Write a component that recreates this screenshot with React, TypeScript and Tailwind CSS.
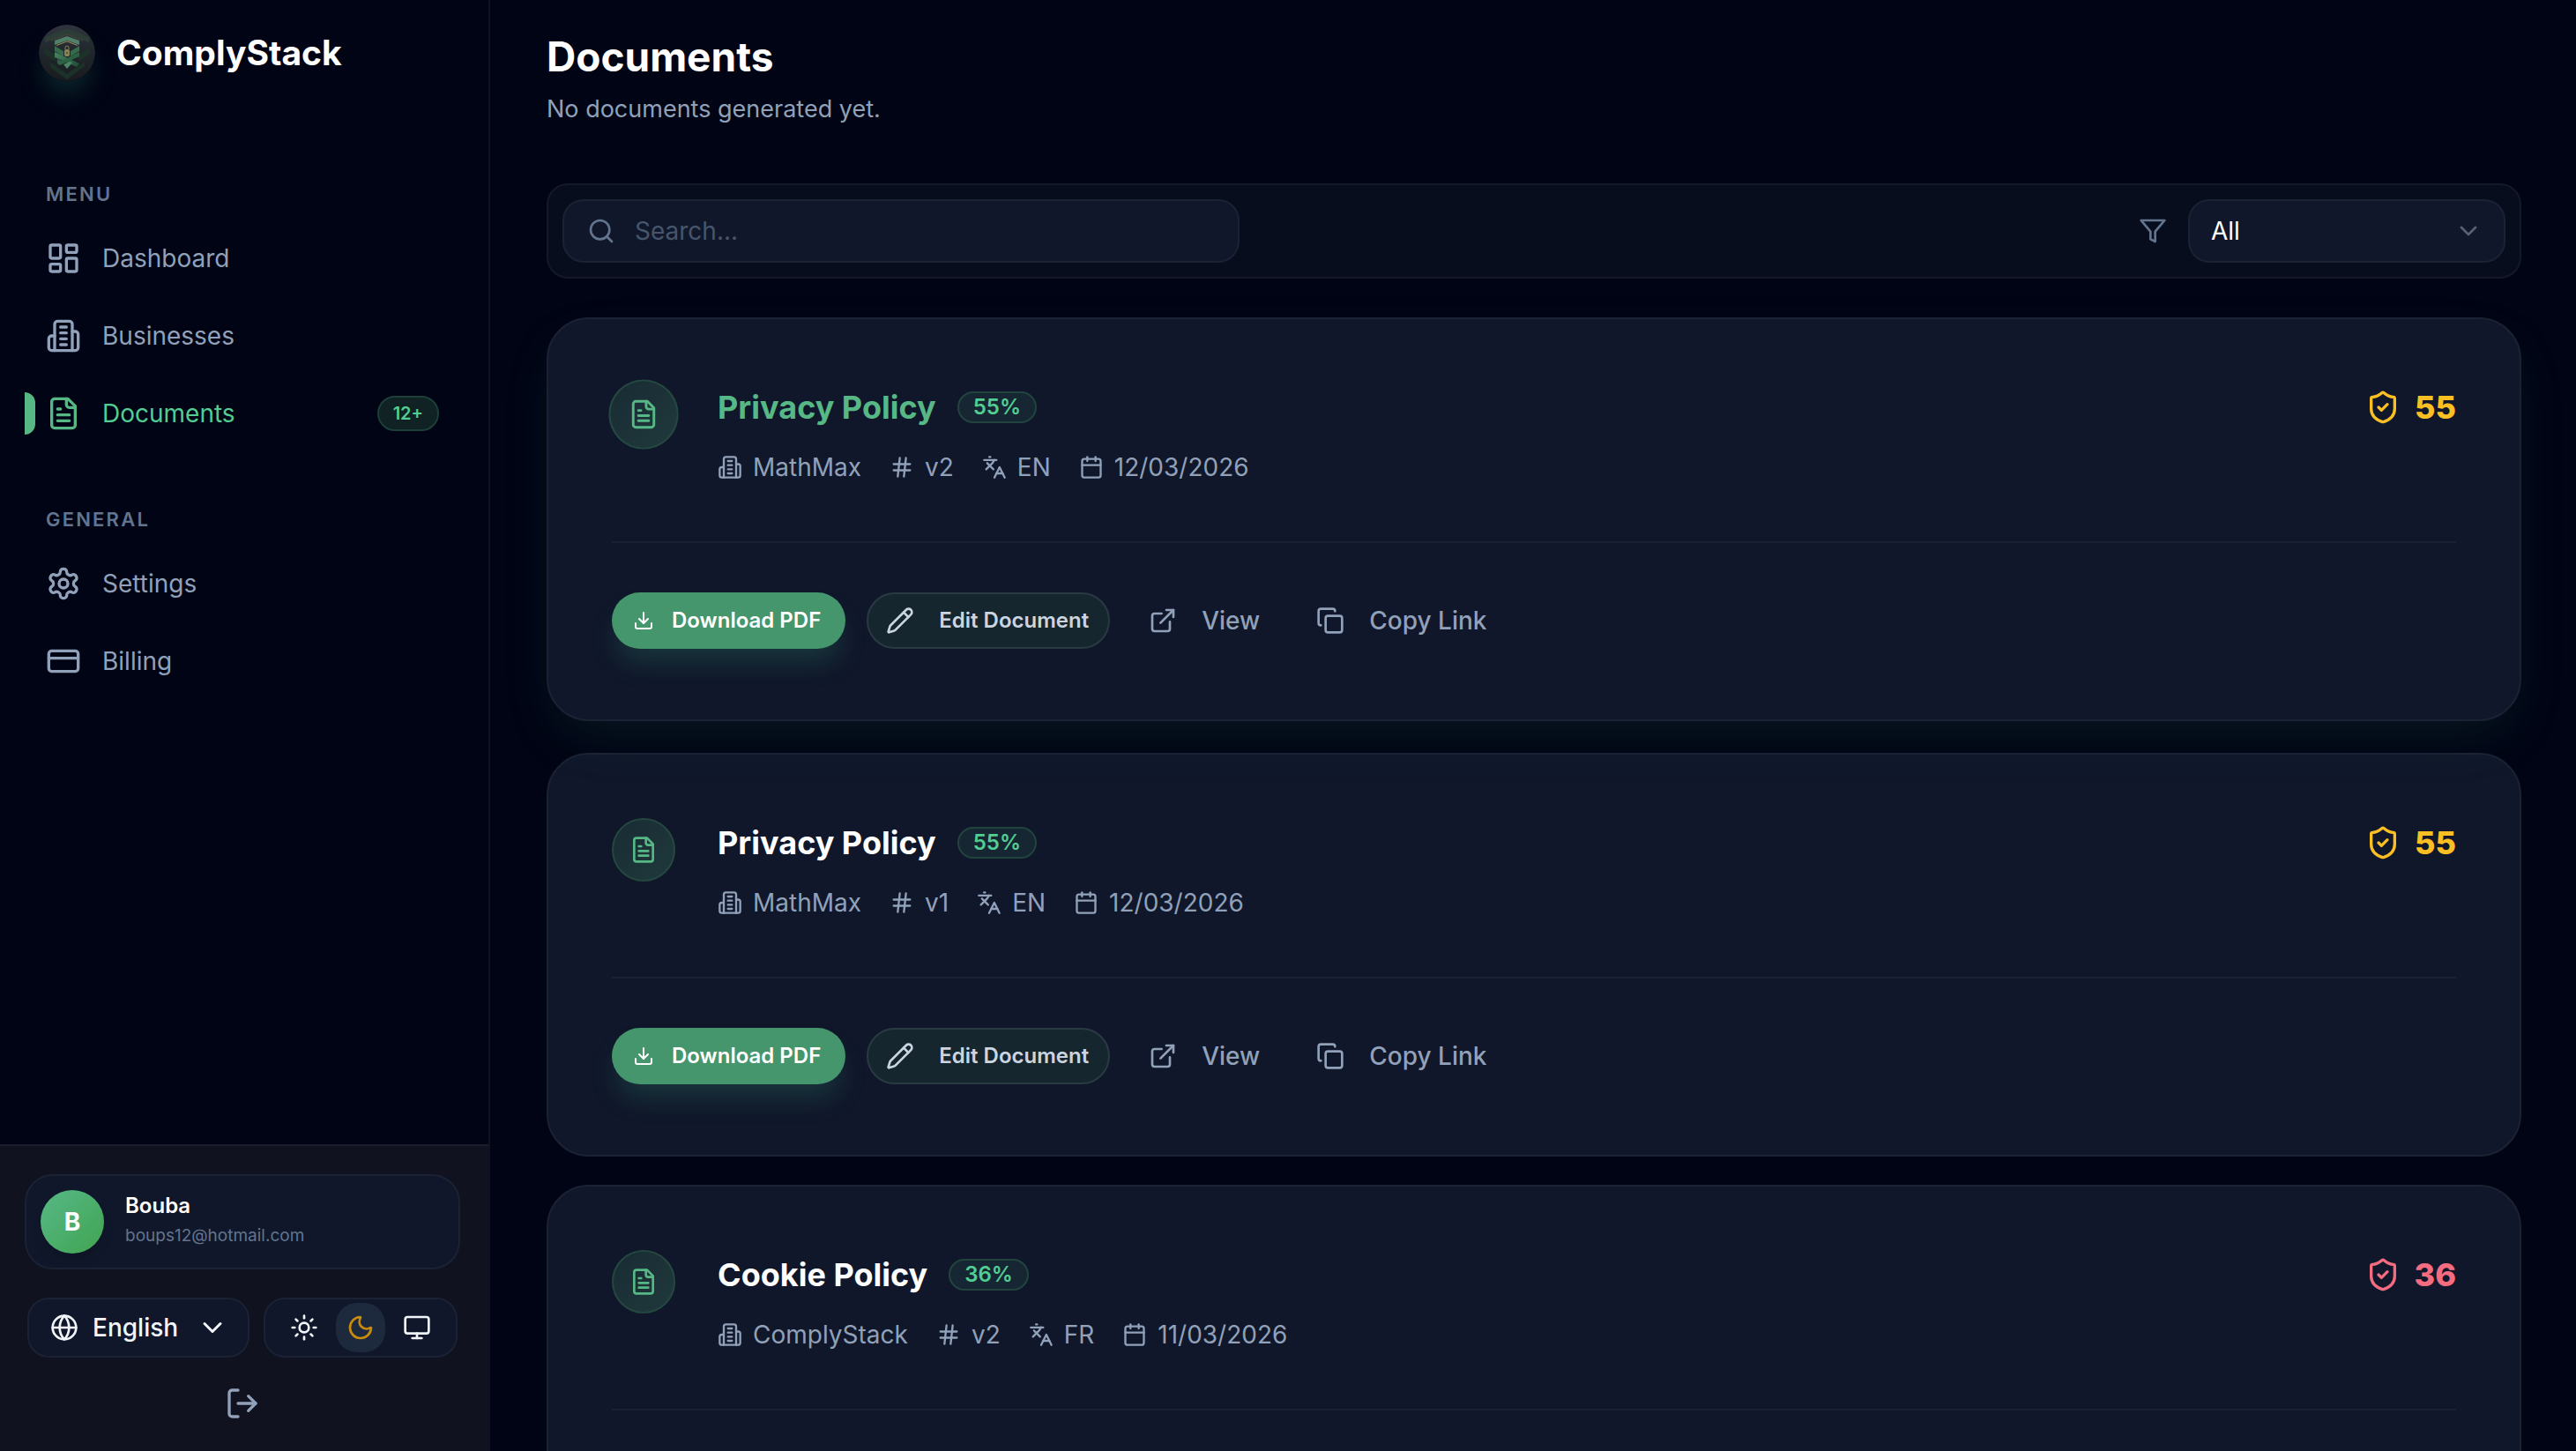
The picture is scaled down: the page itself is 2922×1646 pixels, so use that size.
import type { ComponentType, SVGProps } from "react";
import {
  Calendar,
  ChevronDown,
  Copy,
  CreditCard,
  Download,
  ExternalLink,
  Globe,
  Hash,
  Languages,
  LayoutDashboard,
  LogOut,
  Monitor,
  Moon,
  Pencil,
  Search,
  ShieldCheck,
  Sun,
} from "lucide-react";

type IconType = ComponentType<{ className?: string; strokeWidth?: number }>;

const Svg = ({ children, ...props }: SVGProps<SVGSVGElement>) => (
  <svg
    viewBox="0 0 24 24"
    fill="none"
    stroke="currentColor"
    strokeWidth={2}
    strokeLinecap="round"
    strokeLinejoin="round"
    aria-hidden="true"
    {...props}
  >
    {children}
  </svg>
);

const BuildingIcon: IconType = (props) => (
  <Svg {...props}>
    <path d="M6 22V4a2 2 0 0 1 2-2h8a2 2 0 0 1 2 2v18Z" />
    <path d="M6 12H4a2 2 0 0 0-2 2v6a2 2 0 0 0 2 2h2" />
    <path d="M18 9h2a2 2 0 0 1 2 2v9a2 2 0 0 1-2 2h-2" />
    <path d="M10 6h4M10 10h4M10 14h4M10 18h4" />
  </Svg>
);

const FileIcon: IconType = (props) => (
  <Svg {...props}>
    <path d="M15 2H6a2 2 0 0 0-2 2v16a2 2 0 0 0 2 2h12a2 2 0 0 0 2-2V7Z" />
    <path d="M14 2v4a2 2 0 0 0 2 2h4" />
    <path d="M10 9H8M16 13H8M16 17H8" />
  </Svg>
);

const SettingsIcon: IconType = (props) => (
  <Svg {...props}>
    <path d="M12.22 2h-.44a2 2 0 0 0-2 2v.18a2 2 0 0 1-1 1.73l-.43.25a2 2 0 0 1-2 0l-.15-.08a2 2 0 0 0-2.73.73l-.22.38a2 2 0 0 0 .73 2.73l.15.1a2 2 0 0 1 1 1.72v.51a2 2 0 0 1-1 1.74l-.15.09a2 2 0 0 0-.73 2.73l.22.38a2 2 0 0 0 2.73.73l.15-.08a2 2 0 0 1 2 0l.43.25a2 2 0 0 1 1 1.73V20a2 2 0 0 0 2 2h.44a2 2 0 0 0 2-2v-.18a2 2 0 0 1 1-1.73l.43-.25a2 2 0 0 1 2 0l.15.08a2 2 0 0 0 2.73-.73l.22-.39a2 2 0 0 0-.73-2.73l-.15-.08a2 2 0 0 1-1-1.74v-.5a2 2 0 0 1 1-1.74l.15-.09a2 2 0 0 0 .73-2.73l-.22-.38a2 2 0 0 0-2.73-.73l-.15.08a2 2 0 0 1-2 0l-.43-.25a2 2 0 0 1-1-1.73V4a2 2 0 0 0-2-2z" />
    <circle cx="12" cy="12" r="3" />
  </Svg>
);

const FilterIcon: IconType = (props) => (
  <Svg {...props}>
    <path d="M22 3H2l8 9.46V19l4 2v-8.54z" />
  </Svg>
);

const Logo = () => (
  <svg viewBox="0 0 64 64" className="size-16 rounded-full shadow-[0_20px_30px_-6px_rgba(52,150,120,0.25)]" aria-hidden="true">
    <defs>
      <linearGradient id="logo-bg" x1="0" y1="0" x2="0" y2="1">
        <stop offset="0" stopColor="#30343f" />
        <stop offset="0.5" stopColor="#20262b" />
        <stop offset="1" stopColor="#191c21" />
      </linearGradient>
      <linearGradient id="logo-leaf" x1="0" y1="0" x2="1" y2="1">
        <stop offset="0" stopColor="#4a8664" />
        <stop offset="1" stopColor="#1c4a33" />
      </linearGradient>
    </defs>
    <circle cx="32" cy="32" r="32" fill="url(#logo-bg)" />
    {/* faint oversized shield behind the mark */}
    <path d="M7 14 32 4l25 10v6L32 11 7 20z" fill="#2c3d38" />
    <path d="M14 18 32 11l18 7" fill="none" stroke="#4a4538" strokeWidth="1" />
    <path d="M7 26l12 8v8L7 34zM57 26l-12 8v8l12-8zM12 42l20 14 20-14v5L32 62 14 49z" fill="#1c3229" />
    <path d="M18 18 32 13l14 5v5l-14-5-14 5z" fill="#4f7f66" />
    <path d="M20 23.500 32 19l12 4.500" fill="none" stroke="#a08a58" strokeWidth="1" />
    <path d="M18 24l10 6v6l-10-6zM46 24l-10 6v6l10-6z" fill="#356b4c" />
    <path d="M18 31l28 13-3 4-25-11z" fill="url(#logo-leaf)" />
    <path d="M46 31 26 41l-5-2v5l3 2 22-10z" fill="#2c6144" />
    <path d="M28 45l4 5 6-7-3-1z" fill="#4a8664" />
    <rect x="29" y="28" width="6" height="8" rx="2" fill="#8a8358" />
    <path d="M30 28v-2a2 2 0 0 1 4 0v2" fill="none" stroke="#8a8358" strokeWidth="1" />
    <path d="M32 31v2" stroke="#1c3229" strokeWidth="1" />
  </svg>
);

interface NavItemProps {
  icon: IconType;
  label: string;
  active?: boolean;
  badge?: string;
}

const NavItem = ({ icon: Icon, label, active, badge }: NavItemProps) => (
  <a
    href="#"
    aria-current={active ? "page" : undefined}
    className={`relative flex h-20 items-center gap-6 px-6 text-[28px] ${active ? "text-[#52cd93]" : "text-slate-400"}`}
  >
    {active && <span className="absolute left-0 h-12 w-3 rounded-r-xl bg-[#57b886]" />}
    <Icon className={`size-10 shrink-0 ${active ? "text-[#57b886]" : ""}`} />
    <span className="flex-1">{label}</span>
    {badge && (
      <span className="flex h-10 items-center rounded-full border-2 border-[#1c3f38] bg-[#102224] px-4 text-xl font-semibold">
        {badge}
      </span>
    )}
  </a>
);

const NavHeading = ({ children }: { children: string }) => (
  <h2 className="px-6 text-[22px] leading-8 font-semibold tracking-widest text-slate-500 uppercase">{children}</h2>
);

const ThemeSwitch = () => (
  <div className="flex items-center gap-2 rounded-3xl border-2 border-[#1b2234] bg-[#10172a] px-4 text-slate-100">
    <button type="button" aria-label="Light" className="grid size-14 place-items-center rounded-3xl">
      <Sun className="size-8" />
    </button>
    <button type="button" aria-label="Dark" className="grid size-14 place-items-center rounded-3xl bg-slate-800 text-[#ca8a0b]">
      <Moon className="size-8" />
    </button>
    <button type="button" aria-label="System" className="grid size-14 place-items-center rounded-3xl">
      <Monitor className="size-8" />
    </button>
  </div>
);

const Sidebar = () => (
  <aside className="flex w-[556px] shrink-0 flex-col border-r-2 border-[#0f111f] bg-[#010414]">
    <div className="flex items-center gap-6 px-11 pt-7">
      <Logo />
      <span className="text-[39px] font-bold text-white">ComplyStack</span>
    </div>

    <nav className="flex flex-1 flex-col gap-16 pt-28 pr-8 pl-7">
      <div>
        <NavHeading>Menu</NavHeading>
        <div className="mt-[17px] flex flex-col gap-2">
          <NavItem icon={LayoutDashboard} label="Dashboard" />
          <NavItem icon={BuildingIcon} label="Businesses" />
          <NavItem icon={FileIcon} label="Documents" active badge="12+" />
        </div>
      </div>
      <div>
        <NavHeading>General</NavHeading>
        <div className="mt-[17px] flex flex-col gap-2">
          <NavItem icon={SettingsIcon} label="Settings" />
          <NavItem icon={CreditCard} label="Billing" />
        </div>
      </div>
    </nav>

    <div className="flex flex-col gap-8 border-t-2 border-[#1b1d2b] bg-[#10121f] pt-8 pr-8 pb-[34px] pl-7">
      <div className="flex items-center gap-6 rounded-[32px] border-2 border-[#1b2234] bg-[#10172a] p-4">
        <div className="grid size-[72px] place-items-center rounded-full bg-linear-to-br from-[#57b886] to-[#40a450] text-[28px] font-bold text-white shadow-lg">
          B
        </div>
        <div className="pb-1">
          <p className="text-2xl leading-9 font-semibold text-white">Bouba</p>
          <p className="text-[19px] leading-8 text-slate-500">boups12@hotmail.com</p>
        </div>
      </div>
      <div className="flex h-[68px] justify-center gap-4">
        <button
          type="button"
          className="flex w-[252px] items-center rounded-3xl border-2 border-[#1b2234] bg-[#10172a] pr-[22px] pl-6 text-[28px] font-medium text-slate-100"
        >
          <Globe className="mr-4 size-8" />
          English
          <ChevronDown className="ml-auto size-9" />
        </button>
        <ThemeSwitch />
      </div>
      <button type="button" aria-label="Log out" className="mx-auto text-slate-400">
        <LogOut className="size-10" />
      </button>
    </div>
  </aside>
);

interface DocumentItem {
  title: string;
  business: string;
  version: string;
  language: string;
  date: string;
  score: number;
  hovered?: boolean;
}

const documents: DocumentItem[] = [
  { title: "Privacy Policy", business: "MathMax", version: "v2", language: "EN", date: "12/03/2026", score: 55, hovered: true },
  { title: "Privacy Policy", business: "MathMax", version: "v1", language: "EN", date: "12/03/2026", score: 55 },
  { title: "Cookie Policy", business: "ComplyStack", version: "v2", language: "FR", date: "11/03/2026", score: 36 },
];

const Meta = ({ icon: Icon, children }: { icon: IconType; children: string }) => (
  <span className="flex items-center gap-3">
    <Icon className="size-7" />
    {children}
  </span>
);

const DocumentCard = ({ doc }: { doc: DocumentItem }) => (
  <article
    className={`rounded-[48px] border-2 border-[#1b2234] bg-[#10172a] p-[72px] ${
      doc.hovered ? "-translate-y-1 shadow-[0_24px_60px_-12px_rgba(40,110,90,0.2)]" : ""
    }`}
  >
    <div className="flex items-start gap-12 pb-16">
      <div
        className={`grid size-[72px] shrink-0 place-items-center rounded-full border-2 border-[#24483f] bg-linear-to-br from-[#182b34] to-[#20393b] text-[#57b886] ${
          doc.hovered ? "scale-110" : ""
        }`}
      >
        <FileIcon className="size-8" />
      </div>
      <div className="flex-1">
        <div className="flex h-14 items-center gap-6">
          <h3 className={`text-4xl font-bold ${doc.hovered ? "text-[#57b886]" : "text-white"}`}>{doc.title}</h3>
          <span className="flex h-9 items-center rounded-full border-2 border-[#22443f] bg-[#162632] px-4 text-2xl font-semibold text-[#52cd93]">
            {doc.score}%
          </span>
        </div>
        <div className="mt-5 flex items-center gap-8 text-[28px] leading-10 text-slate-400">
          <Meta icon={BuildingIcon}>{doc.business}</Meta>
          <Meta icon={Hash}>{doc.version}</Meta>
          <Meta icon={Languages}>{doc.language}</Meta>
          <Meta icon={Calendar}>{doc.date}</Meta>
        </div>
      </div>
      <div className={`flex h-14 items-center gap-4 text-4xl font-extrabold ${doc.score >= 50 ? "text-[#fbbf24]" : "text-[#f36c80]"}`}>
        <ShieldCheck className="size-10" />
        {doc.score}
      </div>
    </div>

    <div className="flex items-center gap-6 border-t-2 border-[#1b2133] pt-12">
      <button
        type="button"
        className="flex h-16 items-center gap-5 rounded-full bg-[#45956d] pr-7 pl-6 text-2xl font-semibold text-white shadow-[0_20px_30px_-6px_rgba(52,150,120,0.25)]"
      >
        <Download className="size-6" />
        Download PDF
      </button>
      <button
        type="button"
        className="flex h-16 items-center gap-7 rounded-full border-2 border-[#2a3a43] bg-[#15262e] pr-[22px] pl-5 text-2xl font-semibold text-slate-300"
      >
        <Pencil className="size-8" />
        Edit Document
      </button>
      <a href="#" className="flex h-20 items-center gap-7 px-5 text-[28px] font-medium text-slate-400">
        <ExternalLink className="size-8" />
        View
      </a>
      <button type="button" className="flex h-20 items-center gap-7 px-5 text-[28px] font-medium text-slate-400">
        <Copy className="size-8" />
        Copy Link
      </button>
    </div>
  </article>
);

const FilterBar = () => (
  <div className="mt-16 flex items-center justify-between rounded-3xl border-2 border-[#141827] bg-[#080d1e] p-4">
    <div className="relative w-[768px]">
      <Search className="absolute top-5 left-7 size-8 text-slate-500" />
      <input
        type="text"
        aria-label="Search documents"
        placeholder="Search..."
        className="h-[72px] w-full rounded-3xl border-2 border-[#1b2234] bg-[#10172a] pr-6 pl-20 text-[28px] text-white placeholder:text-slate-600"
      />
    </div>
    <div className="flex items-center gap-6">
      <FilterIcon className="size-8 text-slate-500" />
      <div className="relative w-[360px]">
        <select
          aria-label="Filter by status"
          className="h-[72px] w-full appearance-none rounded-3xl border-2 border-[#1b2234] bg-[#10172a] px-6 text-[28px] text-white"
        >
          <option>All</option>
        </select>
        <ChevronDown className="pointer-events-none absolute top-5 right-[26px] size-8 text-[#566175]" />
      </div>
    </div>
  </div>
);

export default function App() {
  return (
    <div className="flex h-screen overflow-hidden bg-[#010414] font-[Inter,sans-serif]">
      <Sidebar />
      <main className="min-w-0 flex-1 overflow-y-auto pt-8 pr-[62px] pb-16 pl-16 [scrollbar-width:none]">
        <h1 className="text-[46px] leading-[64px] font-bold text-white">Documents</h1>
        <p className="mt-2 text-[27px] leading-10 text-slate-400">No documents generated yet.</p>
        <FilterBar />
        <div className="mt-12 flex flex-col gap-8">
          {documents.map((doc, i) => (
            <DocumentCard key={i} doc={doc} />
          ))}
        </div>
      </main>
    </div>
  );
}
